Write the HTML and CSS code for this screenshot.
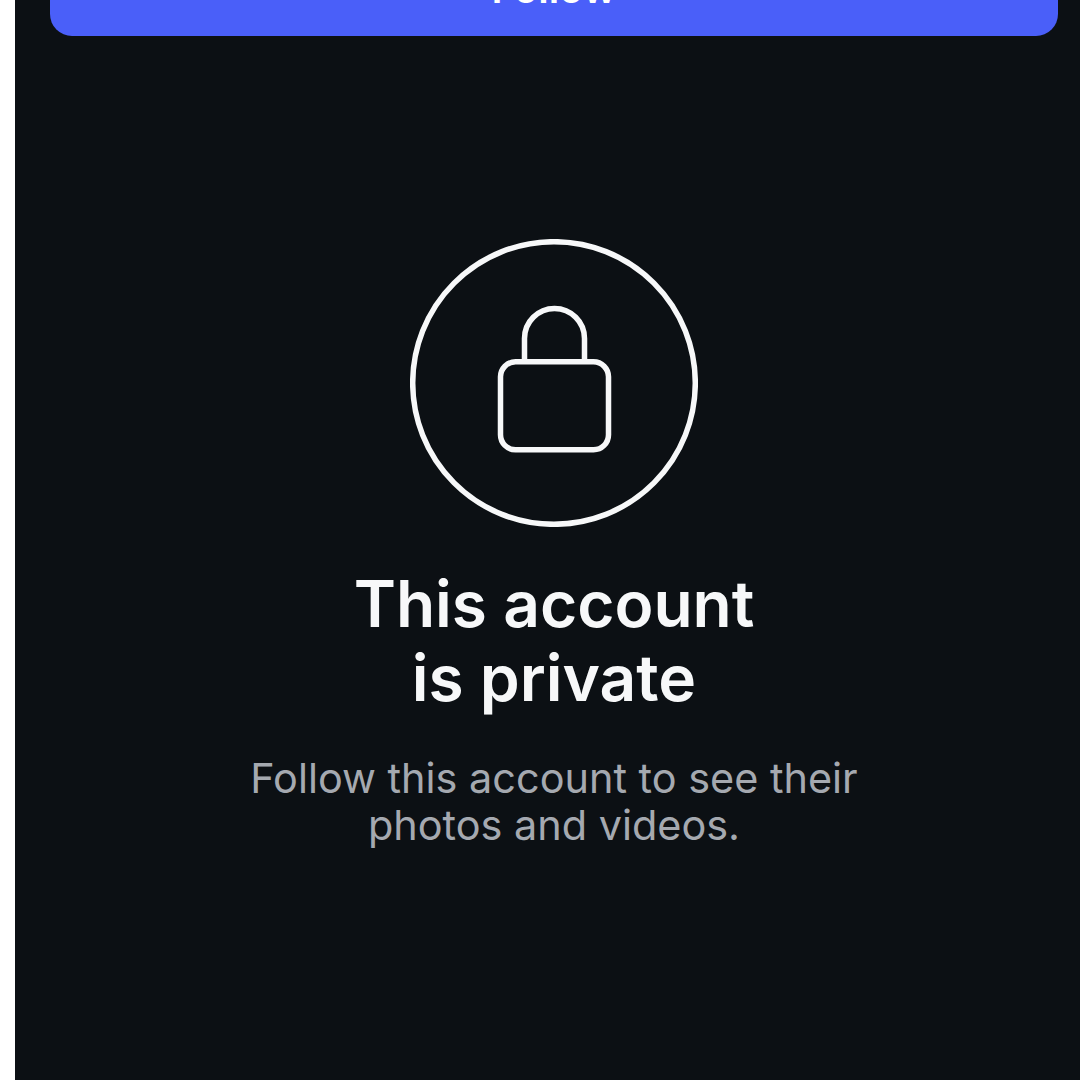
FILE: index.html
```html
<!DOCTYPE html>
<html lang="en">
<head>
    <meta charset="UTF-8">
    <meta name="viewport" content="width=device-width, initial-scale=1.0">
    <title>Private account</title>
    <link rel="stylesheet" href="styles.css">
</head>
<body>
    <main class="screen">
        <button class="follow-btn">Follow</button>
        <section class="private-notice">
            <svg class="lock-icon" width="288" height="288" viewBox="0 0 288 288" fill="none" stroke="#f7f8f9" stroke-width="5.5">
                <circle cx="144" cy="144" r="141.3"/>
                <rect x="90.5" y="122.8" width="108" height="88" rx="15"/>
                <path d="M114.5 122.8V99.5a30 30 0 0 1 60 0v23.3"/>
            </svg>
            <h1 class="notice-title">This account<br>is private</h1>
            <p class="notice-text">Follow this account to see their<br>photos and videos.</p>
        </section>
    </main>
</body>
</html>
```

FILE: styles.css
```css
html, body {
    height: 100%;
}

body {
    margin: 0;
    height: 1080px;
    overflow: hidden;
    background-color: #ffffff;
    font-family: Inter, "Noto Sans", sans-serif;
}

.screen {
    display: flex;
    flex-direction: column;
    box-sizing: border-box;
    height: 1080px;
    margin-left: 15px;
    padding: 0 22px 0 35px;
    background-color: #0c1014;
}

.follow-btn {
    flex-shrink: 0;
    height: 96px;
    margin-top: -60px;
    padding: 0;
    border: none;
    border-radius: 22px;
    background-color: #4a5ff9;
    color: #ffffff;
    font-family: inherit;
    font-size: 40px;
    font-weight: 600;
}

.private-notice {
    display: flex;
    flex-direction: column;
    align-items: center;
    padding-top: 203px;
    text-align: center;
}

.lock-icon {
    display: block;
}

.notice-title {
    margin: 40px 0 0;
    color: #f7f8f9;
    font-size: 64px;
    font-weight: 600;
    line-height: 74px;
}

.notice-text {
    margin: 40px 0 0;
    color: #a5a9b0;
    font-size: 41.4px;
    font-weight: 400;
    line-height: 47px;
}
```
